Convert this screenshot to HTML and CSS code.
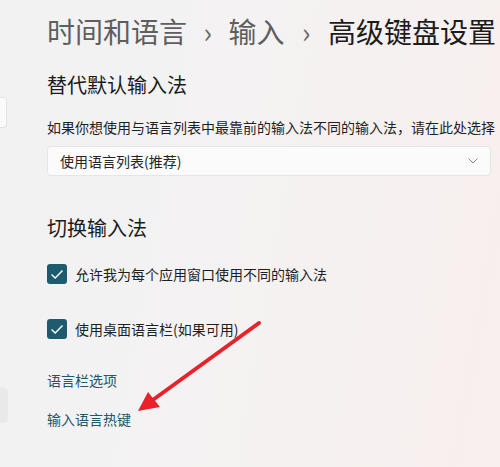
FILE: index.html
```html
<!DOCTYPE html>
<html lang="zh-CN">
<head>
<meta charset="utf-8">
<title>高级键盘设置</title>
<link rel="stylesheet" href="styles.css">
</head>
<body>
<div class="window">
  <nav class="sidebar">
    <div class="nav-card"></div>
    <div class="nav-active"></div>
  </nav>
  <main class="content">
    <h1 class="crumbs">
      <span class="crumb">时间和语言</span><span class="sep">›</span><span class="crumb">输入</span><span class="sep sep2">›</span><span class="crumb current">高级键盘设置</span>
    </h1>
    <h2 class="section-title first">替代默认输入法</h2>
    <p class="desc">如果你想使用与语言列表中最靠前的输入法不同的输入法，请在此处选择</p>
    <div class="select">
      <span>使用语言列表(推荐)</span>
      <svg class="chev" width="10" height="6" viewBox="0 0 10 6"><path d="M0.5 0.5 L5 5 L9.5 0.5" fill="none" stroke="#8a8a8a" stroke-width="1"/></svg>
    </div>
    <h2 class="section-title second">切换输入法</h2>
    <label class="check-row row1">
      <span class="box"><svg width="14" height="11" viewBox="0 0 14 11"><path d="M1.5 5.5 L5.2 9 L12.5 1.5" fill="none" stroke="#ffffff" stroke-width="1.4"/></svg></span>
      <span>允许我为每个应用窗口使用不同的输入法</span>
    </label>
    <label class="check-row row2">
      <span class="box"><svg width="14" height="11" viewBox="0 0 14 11"><path d="M1.5 5.5 L5.2 9 L12.5 1.5" fill="none" stroke="#ffffff" stroke-width="1.4"/></svg></span>
      <span>使用桌面语言栏(如果可用)</span>
    </label>
    <a class="link link1" href="#">语言栏选项</a>
    <a class="link link2" href="#">输入语言热键</a>
  </main>
  <svg class="arrow" width="500" height="467" viewBox="0 0 500 467">
    <line x1="259" y1="323" x2="150" y2="402" stroke="#e8212b" stroke-width="4" stroke-linecap="round"/>
    <polygon points="138,411 148,392 160,407" fill="#e8212b"/>
  </svg>
</div>
</body>
</html>
```
FILE: styles.css
```css
* { box-sizing: border-box; }
html, body { margin: 0; padding: 0; }
body {
  width: 500px;
  height: 467px;
  overflow: hidden;
  font-family: "Noto Sans CJK SC", "Noto Sans", sans-serif;
  color: #1b1b1b;
}
.window {
  position: relative;
  display: flex;
  width: 500px;
  height: 467px;
  background: linear-gradient(100deg, #f2f2f3 0%, #f4f2f2 45%, #f8efee 100%);
}
.sidebar {
  width: 8px;
  flex: none;
  display: flex;
  flex-direction: column;
  overflow: hidden;
}
.nav-card {
  margin-top: 97px;
  height: 31px;
  width: 7px;
  background: #fbfbfb;
  border: 1px solid #e2e2e2;
  border-left: none;
  border-radius: 0 4px 4px 0;
}
.nav-active {
  margin-top: 260px;
  height: 35px;
  width: 8px;
  background: #e9e9ea;
  border-radius: 0 4px 4px 0;
}
.content {
  flex: 1;
  padding: 11px 0 0 39px;
  display: flex;
  flex-direction: column;
  align-items: flex-start;
}
.crumbs {
  margin: 0;
  font-size: 28px;
  line-height: 40px;
  font-weight: 400;
  white-space: nowrap;
  color: #5e5e5e;
  display: flex;
}
.sep {
  margin: 0 16.5px;
  color: #6a6a6a;
}
.sep2 { margin: 0 17.5px; }
.current { color: #1c1c1c; }
.section-title {
  margin: 0;
  font-size: 20px;
  line-height: 28px;
  font-weight: 400;
  color: #1b1b1b;
}
.section-title.first { margin-top: 20px; }
.section-title.second { margin-top: 38px; }
.desc {
  margin: 18px 0 0;
  font-size: 14px;
  line-height: 20px;
  white-space: nowrap;
  color: #1f1f1f;
}
.select {
  margin-top: 9px;
  width: 444px;
  height: 30px;
  background: #fbfbfb;
  border: 1px solid #e6e5e5;
  border-radius: 4px;
  display: flex;
  align-items: center;
  justify-content: space-between;
  padding: 0 12px 0 12px;
  font-size: 14px;
  color: #262626;
}
.check-row {
  display: flex;
  align-items: center;
  gap: 8px;
  height: 20px;
  font-size: 14px;
  line-height: 20px;
  color: #1f1f1f;
}
.row1 { margin-top: 22px; }
.row2 { margin-top: 35px; }
.box {
  width: 20px;
  height: 20px;
  border-radius: 3px;
  background: #1d5b6f;
  display: flex;
  align-items: center;
  justify-content: center;
}
.link {
  font-size: 14px;
  line-height: 20px;
  color: #255568;
  text-decoration: none;
}
.link1 { margin-top: 31px; }
.link2 { margin-top: 19px; }
.arrow {
  position: absolute;
  left: 0;
  top: 0;
  pointer-events: none;
}
```
